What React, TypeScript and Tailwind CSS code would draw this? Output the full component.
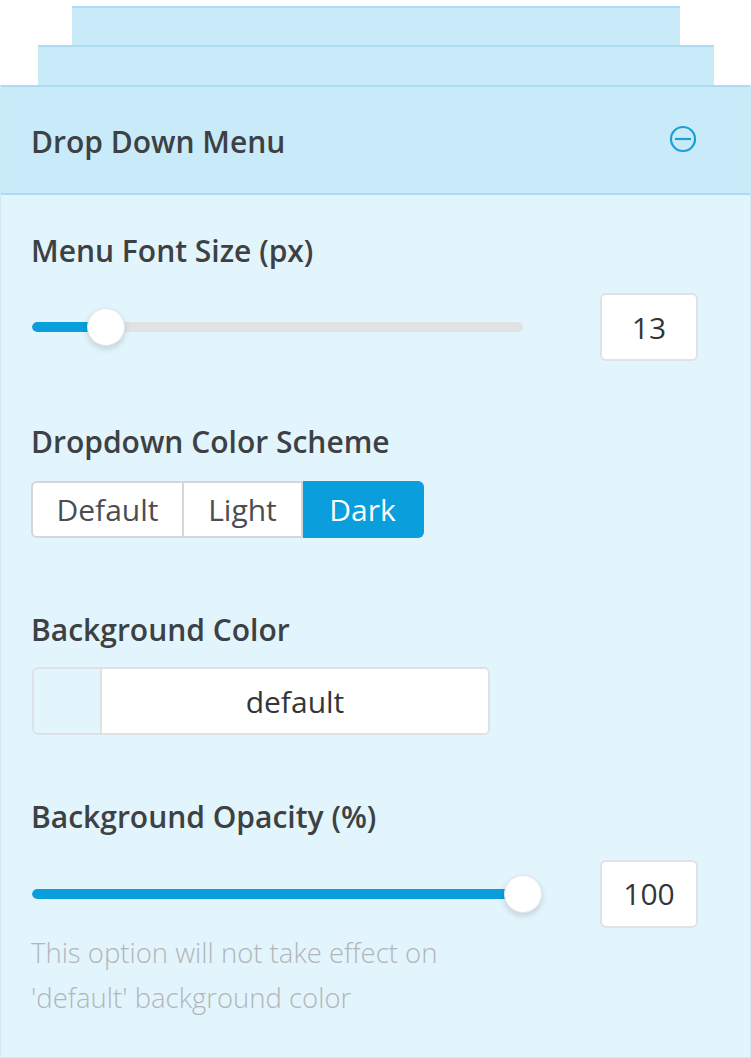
import { useState } from 'react'

const font = { fontFamily: '"Open Sans", "Liberation Sans", sans-serif' }

function Slider({ value, min, max }: { value: number; min: number; max: number }) {
  const pct = ((value - min) / (max - min)) * 100
  return (
    <div className="relative w-[491px] h-[38px] flex items-center">
      <div className="w-full h-[10px] rounded-full bg-[#e1e2e3] overflow-hidden">
        <div className="h-full bg-[#0a9edc] rounded-full" style={{ width: `${pct}%` }} />
      </div>
      <div
        className="absolute top-0 w-[38px] h-[38px] -ml-[19px] rounded-full bg-white border border-[#e4e6e8] shadow-[0_3px_6px_rgba(0,0,0,0.14)]"
        style={{ left: `${pct}%` }}
      />
    </div>
  )
}

function NumberBox({ value }: { value: string }) {
  return (
    <div className="w-[98px] h-[68px] flex items-center justify-center bg-white border-2 border-[#dfe3e5] rounded-[6px] text-[30px] text-[#333638]">
      {value}
    </div>
  )
}

export default function App() {
  const [scheme, setScheme] = useState('Dark')
  const schemes = [
    { name: 'Default', w: 'w-[153px]' },
    { name: 'Light', w: 'w-[119px]' },
    { name: 'Dark', w: 'w-[121px]' },
  ]

  return (
    <div className="w-[751px] h-[1058px] bg-white overflow-hidden" style={font}>
      {/* stacked tabs behind the panel */}
      <div className="pt-[6px]">
        <div className="ml-[72px] w-[608px] h-[39px] bg-[#c8eaf9] border-t-2 border-[#abdcf2]" />
        <div className="ml-[38px] w-[676px] h-[40px] bg-[#c8eaf9] border-t-2 border-[#abdcf2]" />
      </div>

      <div className="w-[751px] bg-[#e2f4fc] border-x border-b-2 border-[#cfe9f5]">
        {/* Header */}
        <div className="h-[110px] flex items-center justify-between pl-[30px] pr-[52px] bg-[#c8eaf9] border-t-2 border-b-2 border-[#abdcf2]">
          <h2 className="text-[30px] font-semibold text-[#3d4144] mt-[3px]">Drop Down Menu</h2>
          <svg width="30" height="30" viewBox="0 0 30 30" fill="none" stroke="#1a9fd8" strokeWidth="2.2" className="-mt-[3px]">
            <circle cx="15" cy="15" r="12" />
            <path d="M7 15h16" />
          </svg>
        </div>

        {/* Body */}
        <div className="pl-[31px] pr-[52px] pt-[38px] pb-[37px] text-[#3d4144]">
          <div className="-ml-[1px] text-[30px] font-semibold leading-[36px]">Menu Font Size (px)</div>
          <div className="mt-[24px] h-[68px] flex items-center justify-between">
            <Slider value={13} min={10} max={30} />
            <NumberBox value="13" />
          </div>

          <div className="mt-[63px] -ml-[1px] text-[30px] font-semibold leading-[36px]">Dropdown Color Scheme</div>
          <div className="mt-[21px] -ml-[1px] flex h-[57px] w-fit">
            {schemes.map((s, i) => (
              <button
                key={s.name}
                onClick={() => setScheme(s.name)}
                className={`${s.w} h-full text-[30px] border-2 ${
                  scheme === s.name
                    ? 'bg-[#0a9edc] border-[#0a9edc] text-white'
                    : 'bg-white border-[#d3d7da] text-[#4a4e51]'
                } ${i === 0 ? 'rounded-l-[6px]' : 'border-l-0'} ${i === schemes.length - 1 ? 'rounded-r-[6px]' : ''}`}
              >
                {s.name}
              </button>
            ))}
          </div>

          <div className="mt-[74px] -ml-[1px] text-[30px] font-semibold leading-[36px]">Background Color</div>
          <div className="mt-[19px] w-[458px] h-[68px] flex border-2 border-[#dce2e5] rounded-[6px] overflow-hidden">
            <div className="w-[68px] h-full bg-[#e2f4fc] border-r-2 border-[#dce2e5]" />
            <div className="flex-1 bg-white flex items-center justify-center text-[30px] text-[#333638]">
              default
            </div>
          </div>

          <div className="mt-[64px] -ml-[1px] text-[30px] font-semibold leading-[36px]">Background Opacity (%)</div>
          <div className="mt-[25px] h-[67px] flex items-center justify-between">
            <Slider value={100} min={0} max={100} />
            <NumberBox value="100" />
          </div>
          <p className="mt-[3px] -ml-[1px] text-[27.5px] font-light leading-[45px] text-[#b3b6b8]">
            This option will not take effect on
            <br />
            'default' background color
          </p>
        </div>
      </div>
    </div>
  )
}
